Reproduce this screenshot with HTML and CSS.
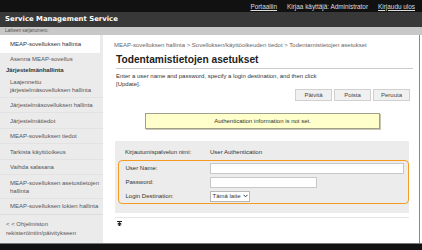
FILE: index.html
```html
<!DOCTYPE html>
<html>
<head>
    <title>Service Management Service</title>
    <link rel="stylesheet" href="styles.css">
</head>
<body>

<div class="topbar">
    <a href="#">Portaaliin</a>
    <span>Kirjaa käyttäjä: Administrator</span>
    <a href="#">Kirjaudu ulos</a>
</div>
<div class="titlebar">Service Management Service</div>
<div class="serial">Laitteen sarjanumero:</div>

<div class="layout">
    <div class="sidebar">
        <div class="item active">MEAP-sovelluksen hallinta</div>
        <div class="item install">Asenna MEAP-sovellus</div>
        <div class="group">Järjestelmänhallinta</div>
        <div class="item first">Laajennettu<br>järjestelmäsovelluksen hallinta</div>
        <div class="item">Järjestelmäsovelluksen hallinta</div>
        <div class="item">Järjestelmätiedot</div>
        <div class="item">MEAP-sovelluksen tiedot</div>
        <div class="item">Tarkista käyttöoikeus</div>
        <div class="item">Vaihda salasana</div>
        <div class="item">MEAP-sovelluksen asetustietojen<br>hallinta</div>
        <div class="item">MEAP-sovelluksen lokien hallinta</div>
        <div class="register">&lt; &lt; Ohjelmiston<br>rekisteröintiin/päivitykseen</div>
    </div>

    <div class="main">
        <div class="crumbs">MEAP-sovelluksen hallinta &gt; Sovelluksen/käyttöoikeuden tiedot &gt; Todentamistietojen asetukset</div>
        <h1>Todentamistietojen asetukset</h1>
        <p class="intro">Enter a user name and password, specify a login destination, and then click<br>[Update].</p>

        <div class="buttons">
            <button>Päivitä</button>
            <button>Poista</button>
            <button>Peruuta</button>
        </div>

        <div class="notice">Authentication information is not set.</div>

        <div class="form">
            <div class="row">
                <span class="label">Kirjautumispalvelun nimi:</span>
                <span>User Authentication</span>
            </div>
            <div class="auth">
                <div class="row">
                    <span class="label">User Name:</span>
                    <input type="text" class="wide">
                </div>
                <div class="row">
                    <span class="label">Password:</span>
                    <input type="password" class="short">
                </div>
                <div class="row">
                    <span class="label">Login Destination:</span>
                    <span class="select">Tämä laite <svg width="5" height="4" viewBox="0 0 5 4"><polyline points="0.5,0.8 2.5,2.8 4.5,0.8" fill="none" stroke="#333" stroke-width="1"/></svg></span>
                </div>
            </div>
        </div>
        <div class="sep"></div>

        <div class="totop">
            <svg width="5" height="5" viewBox="0 0 5 5"><rect x="0" y="0" width="5" height="1" fill="#222"/><polygon points="2.5,1 5,3.2 0,3.2" fill="#222"/><rect x="1.5" y="3" width="2" height="2" fill="#222"/></svg>
        </div>
    </div>
</div>

<div class="footer"></div>

</body>
</html>
```

FILE: styles.css
```css
BODY {
    margin : 0;
    width : 422px;
    height : 250px;
    overflow : hidden;
    font-family : "Liberation Sans", arial, sans-serif;
    font-size : 6px;
    color : #333;
    background-color : #fff;
}
.topbar {
    height : 12px;
    background-color : #111;
    display : flex;
    justify-content : flex-end;
    align-items : center;
    gap : 10px;
    padding-right : 7px;
    color : #ddd;
    font-size : 6.4px;
}
.topbar A {
    color : #ddd;
}
.titlebar {
    height : 15px;
    background-color : #383838;
    color : #fff;
    font-family : "DejaVu Sans", verdana, sans-serif;
    font-weight : bold;
    font-size : 6.9px;
    line-height : 15px;
    padding-left : 5px;
}
.serial {
    height : 8px;
    background-color : #c8c8c8;
    color : #555;
    font-size : 4.5px;
    line-height : 8px;
    padding-left : 5px;
}
.layout {
    display : flex;
    height : 208px;
    overflow : hidden;
}
.sidebar {
    width : 103px;
    background-color : #ebebeb;
    flex : none;
    white-space : nowrap;
}
.item {
    padding : 3.5px 0 4px 10px;
    line-height : 8px;
    color : #555;
    border-top : 1px solid #e2e2e2;
    margin-top : -1px;
}
.item.active {
    background-color : #fff;
    padding-top : 5px;
    padding-bottom : 5px;
    border-top : none;
    margin-top : 0;
    width : 90px;
    color : #333;
}
.item.install {
    border-top : none;
    margin-top : 0;
    padding-top : 2px;
    padding-bottom : 2px;
}
.item.first {
    border-top : none;
    margin-top : 0;
}
.group {
    font-weight : bold;
    padding : 1px 0 0 6px;
    line-height : 8px;
    color : #333;
}
.register {
    border-top : 1px solid #ddd;
    padding : 5px 0 0 6px;
    line-height : 9px;
    color : #555;
}
.main {
    flex : 1;
    padding : 6px 0 0 11px;
    margin-right : 2px;
    border-right : 1px solid #888;
}
.crumbs {
    color : #666;
    font-size : 6px;
    line-height : 8px;
}
H1 {
    font-size : 10.2px;
    line-height : 12px;
    font-weight : bold;
    color : #222;
    margin : 5px 6px 0 2px;
    padding-bottom : 2px;
    border-bottom : 1px solid #ccc;
}
.intro {
    margin : 3px 0 0 2px;
    line-height : 8px;
    font-size : 6px;
}
.buttons {
    display : flex;
    justify-content : flex-end;
    gap : 2px;
    margin : 1px 9px 0 0;
}
BUTTON {
    width : 37px;
    height : 12px;
    padding : 0;
    background-color : #f0f0f0;
    border : 1px solid #d0d0d0;
    font-family : inherit;
    font-size : 6px;
    color : #444;
}
.notice {
    margin : 12px 39px 0 31px;
    height : 14px;
    line-height : 14px;
    background-color : #ffffcc;
    border : 1px solid #a0a08a;
    box-shadow : 1px 1px 0 #c8c8b0;
    text-align : center;
    font-size : 6px;
}
.form {
    margin : 12px 10px 0 1px;
    background-color : #ececec;
    padding : 6.5px 0 9px 0;
}
.row {
    display : flex;
    align-items : center;
    line-height : 8px;
}
.label {
    width : 85px;
    padding-left : 10px;
    flex : none;
}
.auth {
    margin : 4.5px 0 0 3px;
    border : 1.5px solid #f59a23;
    border-radius : 4px;
    padding-right : 4px;
}
.auth .row {
    height : 14px;
}
.auth .label {
    width : 84px;
    padding-left : 6.5px;
}
INPUT {
    height : 9px;
    padding : 0;
    border : 1px solid #c8c8c8;
    background-color : #fff;
}
INPUT.wide {
    flex : 1;
}
INPUT.short {
    width : 105px;
}
.select {
    display : flex;
    align-items : center;
    gap : 2px;
    height : 9px;
    padding : 0 1px 0 2px;
    border : 1px solid #b8b8b8;
    background-color : #fff;
    color : #333;
}
.sep {
    margin : 4px 10px 0 1px;
    border-top : 1px solid #e6e6e6;
}
.totop {
    margin : 3px 0 0 3px;
    line-height : 5px;
}
.footer {
    height : 7px;
    background-color : #111;
    border-top : 1px solid #777;
}
```
